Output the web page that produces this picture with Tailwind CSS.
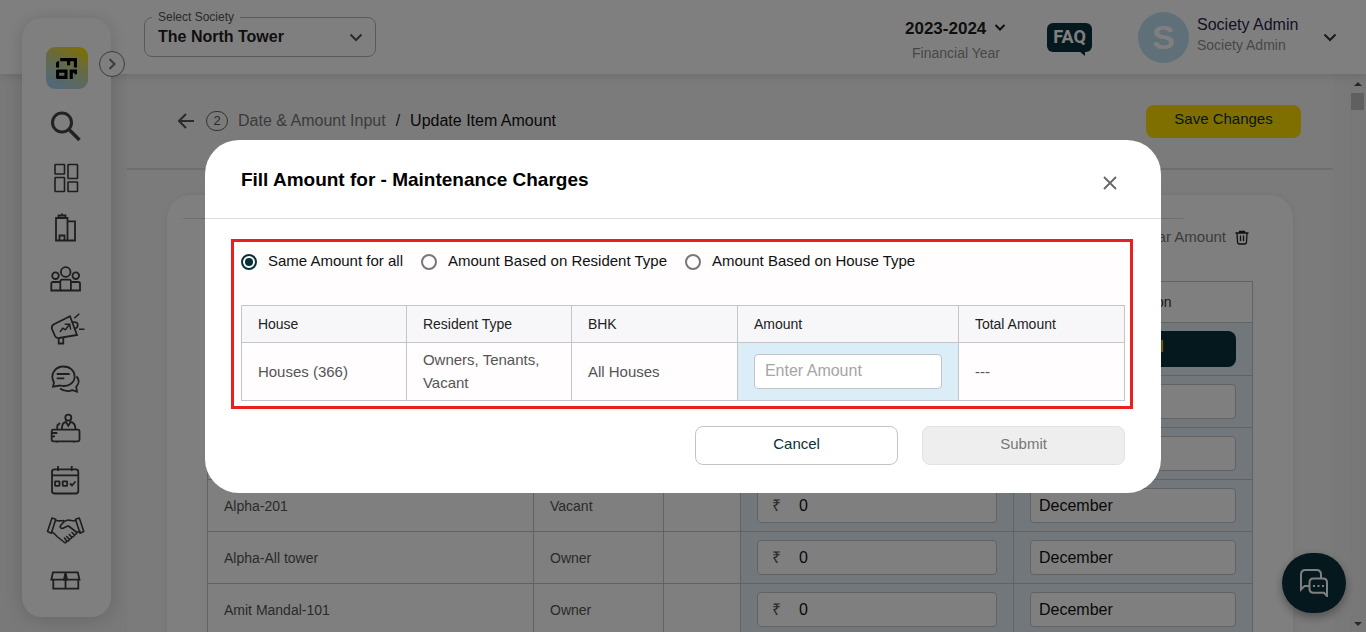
<!DOCTYPE html>
<html lang="en">
  <head>
    <meta charset="UTF-8" />
    <meta name="viewport" content="width=device-width, initial-scale=1.0" />
    <title>Update Item Amount</title>
    <script src="https://cdn.jsdelivr.net/npm/@tailwindcss/browser@4"></script>
  </head>
  <body class="h-screen overflow-hidden flex flex-col bg-[#f2f2f2] font-['Liberation_Sans',Arial,sans-serif] text-[#1f1f1f]">
    <!-- Top bar -->
    <header class="relative flex-none h-[74px] pl-36 pr-7 flex items-center justify-between bg-white shadow-[0_2px_10px_rgba(0,0,0,0.12)]">
      <div class="relative w-[232px]">
        <label for="society" class="absolute -top-2 left-2 px-1.5 bg-white text-xs leading-4 text-[#555]">Select Society</label>
        <select
          id="society"
          class="appearance-none w-full h-10 pl-[13px] pr-8 border border-[#b4b4b4] rounded-lg bg-white text-base font-bold"
        >
          <option>The North Tower</option>
        </select>
        <svg class="absolute right-3 top-3 w-4 h-4 pointer-events-none" viewBox="0 0 16 16" fill="none" stroke="#555" stroke-width="2">
          <path d="M2.5 5.5 8 11l5.500-5.500" />
        </svg>
      </div>
      <div class="flex items-center">
        <div class="w-[102px] mr-10 pt-2 text-center">
          <button class="flex items-center gap-2 text-[17px] leading-6 font-bold">
            2023-2024
            <svg class="w-3 h-3 mb-1" viewBox="0 0 12 12" fill="none" stroke="#1f1f1f" stroke-width="2">
              <path d="M1.500 4 6 8.500 10.500 4" />
            </svg>
          </button>
          <p class="text-sm leading-6 text-[#8f8f8f]">Financial Year</p>
        </div>
        <button class="relative w-[45px] h-[29px] mr-[46px] rounded-md bg-[#08303a] text-white text-lg leading-7 font-bold font-['Roboto','Liberation_Sans',sans-serif]">
          FAQ
          <svg class="absolute right-1.5 top-7 w-2 h-1.5" viewBox="0 0 8 6" fill="#08303a"><path d="M1 0h6v5z" /></svg>
        </button>
        <div class="w-[51px] h-[51px] mr-2 rounded-full bg-[#bfe0f0] flex items-center justify-center text-white text-[34px] font-bold">S</div>
        <div class="w-[125px] pb-1">
          <p class="text-base leading-5 text-[#26264a]">Society Admin</p>
          <p class="text-sm leading-5 text-[#8f8f8f]">Society Admin</p>
        </div>
        <button aria-label="Account menu">
          <svg class="w-4 h-4" viewBox="0 0 16 16" fill="none" stroke="#333" stroke-width="2">
            <path d="M2.500 5.500 8 11l5.500-5.500" />
          </svg>
        </button>
      </div>
    </header>

    <!-- Sidebar -->
    <nav class="fixed top-[18px] bottom-[15px] left-[22px] w-[89px] pt-[29px] pb-[17px] flex flex-col items-center rounded-[20px] bg-white shadow-[0_2px_18px_rgba(0,0,0,0.16)]">
      <a href="#" aria-label="Home" class="w-[42px] h-[42px] mb-[17px] rounded-[9px] bg-[linear-gradient(25deg,#a5d0f5_10%,#c9d48f_55%,#ffde00_95%)] flex items-center justify-center">
        <svg class="w-[21px] h-[21px]" viewBox="0 0 20 20" fill="#000">
          <path d="M0 4.500 1.500 3H3V9H0zM4 0H20V9H17V3H13.500V7H10.500V3H4z" />
          <path d="M1 11H11V20H1L0 19V12zM3 14V17H8V14z" fill-rule="evenodd" />
          <path d="M13 11H20V15.500H17.500V14H16V20H13z" />
        </svg>
      </a>
      <button
        aria-label="Expand menu"
        class="absolute left-[77px] top-[33px] w-[26px] h-[26px] rounded-full border border-[#777] bg-white flex items-center justify-center"
      >
        <svg class="w-3 h-3" viewBox="0 0 12 12" fill="none" stroke="#777" stroke-width="2"><path d="M3.500 1 8.500 6l-5 5" /></svg>
      </button>
      <div class="flex-1 pr-0.5 flex flex-col justify-between">
        <a href="#" aria-label="Search" class="mb-0.5">
          <svg class="block w-10 h-10" viewBox="0 0 40 40" fill="none" stroke="#444" stroke-width="3">
            <circle cx="16" cy="16.500" r="9.500" />
            <path d="m22.500 23 11 11" stroke-width="3.500" />
          </svg>
        </a>
        <a href="#" aria-label="Dashboard">
          <svg class="block w-10 h-10" viewBox="0 0 40 40" fill="none" stroke="#3c3c3c" stroke-width="1.600">
            <rect x="9" y="6.500" width="9.500" height="9.500" rx="0.500" />
            <rect x="22" y="6.500" width="9.500" height="14" rx="0.500" />
            <rect x="9" y="19.500" width="9.500" height="14" rx="0.500" />
            <rect x="22" y="24" width="9.500" height="9.500" rx="0.500" />
          </svg>
        </a>
        <a href="#" aria-label="Buildings">
          <svg class="block w-10 h-10" viewBox="0 0 40 40" fill="none" stroke="#3c3c3c" stroke-width="1.800">
            <path d="M10 10h11.500v22.500H10zM12.500 10V7.500h7V10M16 7.500V5.500M13.500 32.500v-5h5v5M21.500 13.300H29v19.200h-7.500" />
          </svg>
        </a>
        <a href="#" aria-label="Members">
          <svg class="block w-10 h-10" viewBox="0 0 40 40" fill="none" stroke="#3c3c3c" stroke-width="1.800">
            <circle cx="19.700" cy="13" r="4.800" />
            <circle cx="9.500" cy="16.700" r="3.300" />
            <circle cx="29.800" cy="16.700" r="3.300" />
            <path d="M14.300 31.500V22.500q0-1.800 1.800-1.800h7q1.800 0 1.800 1.800v9M14.300 23H7q-1.700 0-1.700 1.700v6.800H34v-6.800Q34 23 32.300 23h-7.500" />
          </svg>
        </a>
        <a href="#" aria-label="Announcements">
          <svg class="block w-10 h-10" viewBox="0 0 40 40" fill="none" stroke="#3c3c3c" stroke-width="1.800">
            <path d="M24 7.300 31 26l-18 3q-3 .3-4-2l-3-7q-.8-3 1.500-4.500z" />
            <path d="M26.500 13.300c3.500-.8 5.500.5 5.200 3.200-.2 2-1.500 3-3.200 3.100M12.700 29v5.500h4.600V28.500" />
            <path d="m28.300 9.300 5-4.600M33 20.300h5.500M14 23l2.700-3.700 2.600 1.400 4.400-5.400M18.700 15.300h5l1 5.400" stroke-width="1.500" />
          </svg>
        </a>
        <a href="#" aria-label="Messages">
          <svg class="block w-10 h-10" viewBox="0 0 40 40" fill="none" stroke="#3c3c3c" stroke-width="1.800">
            <path d="M8 23.500C3.500 15.500 9 7.500 17.700 7.500c6.300 0 11 4.500 11 10 0 6.500-7 11-14.500 9L7 27.700z" />
            <path d="M30.500 17.500c3 3 2.600 7-.3 10.300l.8 4.900-4.500-1.500c-4 1.500-9 .8-12.500-1.700M10.700 15h13M10.700 19.300h7.600" />
          </svg>
        </a>
        <a href="#" aria-label="Help desk">
          <svg class="block w-10 h-10" viewBox="0 0 40 40" fill="none" stroke="#3c3c3c" stroke-width="1.800">
            <rect x="5.700" y="20.700" width="27.800" height="11.600" rx="1.500" />
            <circle cx="22.300" cy="8.700" r="3" />
            <path d="M15.800 20.700c0-4.500 1.700-7.500 4.200-7.700l2.300 3.700 2.300-3.700c3 .3 4.900 3.200 4.900 7.700M11.300 20.500v-4l2.700-2.500M6 24h5.300M6 27.300h3M11 32.500v1M28 32.500v1" />
          </svg>
        </a>
        <a href="#" aria-label="Calendar">
          <svg class="block w-10 h-10" viewBox="0 0 40 40" fill="none" stroke="#3c3c3c" stroke-width="1.800">
            <rect x="6" y="9.300" width="26.300" height="24.200" rx="2.500" />
            <path d="M6 15.300h26.300M12 6v5M25.700 6v5M24 23.500l2 2 3.500-4" />
            <rect x="9" y="21.300" width="4.500" height="4.500" rx="0.500" />
            <rect x="16.700" y="21.300" width="4.500" height="4.500" rx="0.500" />
          </svg>
        </a>
        <a href="#" aria-label="Vendors">
          <svg class="block w-10 h-10" viewBox="0 0 40 40" fill="none" stroke="#3c3c3c" stroke-width="1.600" stroke-linejoin="round" stroke-linecap="round">
            <path d="M6 8 9.800 9.300 5.300 23.300 1.500 21.500zM33.300 8l-3.800 1.300L34 23.300l3.800-1.800z" />
            <path d="M9.800 10.500c3.500.6 5.500.4 7.700 0M29.500 10.700c-3.500.5-5-1-8.500-.5-2.500.3-4.500 3-6.500 5.500-1.200 1.800.8 3 2.500 2.500 2.500-.8 3.500-2.200 5.500-2.200L31 22.500l3-1.500M6 22.200c2.500.6 3 2.300 5 4.300l7.500 6c1.300.7 2.500-.5 2-1.700L18.500 28M20.700 31c1.800.6 3-.6 2.300-2l-2.300-2.500M23 28.800c1.800.6 3-.8 2.300-2l-2-2.300M25.500 26.700c1.800.6 3.200-.8 2.500-2.200l-2-2M28 24.500c1.600.4 2.800-.8 2.500-2.200" />
          </svg>
        </a>
        <a href="#" aria-label="Inventory">
          <svg class="block w-10 h-10" viewBox="0 0 40 40" fill="none" stroke="#3c3c3c" stroke-width="1.800">
            <path d="M7 12.300h24.800l1.700 7.400H5.300zM7.300 19.700v9h25v-9M19.500 19.700v9" />
            <path d="m19.500 12.500 1.500 7h-3z" fill="#3c3c3c" />
          </svg>
        </a>
      </div>
    </nav>

    <div class="flex-1 min-h-0 flex">
      <main class="flex-1 min-w-0 ml-[127px] mr-4 overflow-hidden bg-[#f7f7f7]">
        <div class="h-24 pl-[51px] pr-8 flex items-center justify-between border-b-2 border-[#dcdcdc]">
          <div class="flex items-center text-base">
            <a href="#" aria-label="Back">
              <svg class="w-4 h-4" viewBox="0 0 16 16" fill="none" stroke="#555" stroke-width="2"><path d="M16 8H1.500M8 1 1 8l7 7" /></svg>
            </a>
            <span class="w-[22px] h-5 ml-3 mr-2.5 rounded-full border border-[#666] flex items-center justify-center text-[13px] text-[#555]">2</span>
            <a href="#" class="text-[#777]">Date &amp; Amount Input</a>
            <span class="mx-2.5">/</span>
            <h1 class="text-[#111]">Update Item Amount</h1>
          </div>
          <button class="w-[155px] h-[33px] rounded-lg bg-[#ffde00] pb-1 text-[15px] text-[#08303a]">Save Changes</button>
        </div>

        <section class="mt-[25px] ml-10 mr-10 rounded-t-[24px] bg-white shadow-[0_0_6px_rgba(0,0,0,0.08)]">
          <div class="pt-[23px] pl-4 pr-[110px]"><hr class="border-[#ddd]" /></div>
          <div class="h-[62px] pt-1.5 pr-[43px] flex justify-end items-start">
            <button class="flex items-center gap-2 text-[15px] leading-6 text-[#777]">
              Clear Amount
              <svg class="w-4 h-4" viewBox="0 0 16 16" fill="none" stroke="#222" stroke-width="1.300">
                <path d="M1.500 4h13M5.500 4V2.500h5V4M3 4l.5 9q.1 2 2 2h5q1.900 0 2-2L13 4M6.500 6.500V12M9.500 6.500V12" />
              </svg>
            </button>
          </div>
          <table class="table-fixed w-[1046px] ml-10 border-collapse text-left text-sm text-[#555]">
            <colgroup>
              <col class="w-[326px]" />
              <col class="w-[130px]" />
              <col class="w-[77px]" />
              <col class="w-[273px]" />
              <col />
            </colgroup>
            <thead class="text-[#333]">
              <tr class="h-[41px]">
                <th class="border border-[#c4c4c8] px-4 font-normal">House</th>
                <th class="border border-[#c4c4c8] px-4 font-normal">Resident</th>
                <th class="border border-[#c4c4c8] px-4 font-normal">BHK</th>
                <th class="border border-[#c4c4c8] px-4 font-normal">Amount</th>
                <th class="border border-[#c4c4c8] px-4 font-normal">Installment Description</th>
              </tr>
            </thead>
            <tbody>
              <tr class="h-[53px]">
                <td class="border border-[#c4c4c8] px-4"></td>
                <td class="border border-[#c4c4c8] px-4"></td>
                <td class="border border-[#c4c4c8] px-4"></td>
                <td class="border border-[#c4c4c8] px-4 bg-[#e3eff5]"></td>
                <td class="border border-[#c4c4c8] px-4 bg-[#e3eff5]">
                  <button class="block w-full h-9 pb-1 rounded-lg bg-[#08303a] text-base text-[#ffde00]">Apply All</button>
                </td>
              </tr>
              <tr class="h-[52px]">
                <td class="border border-[#c4c4c8] px-4">Alpha-101</td>
                <td class="border border-[#c4c4c8] px-4">Owner</td>
                <td class="border border-[#c4c4c8] px-4"></td>
                <td class="border border-[#c4c4c8] px-4 bg-[#e3eff5]"></td>
                <td class="border border-[#c4c4c8] px-4 bg-[#e3eff5]">
                  <input aria-label="Description" class="block w-full h-[35px] px-2 border border-[#c4c4c8] rounded bg-white text-base text-[#111]" />
                </td>
              </tr>
              <tr class="h-[52px]">
                <td class="border border-[#c4c4c8] px-4">Alpha-102</td>
                <td class="border border-[#c4c4c8] px-4">Owner</td>
                <td class="border border-[#c4c4c8] px-4"></td>
                <td class="border border-[#c4c4c8] px-4 bg-[#e3eff5]"></td>
                <td class="border border-[#c4c4c8] px-4 bg-[#e3eff5]">
                  <input aria-label="Description" class="block w-full h-[35px] px-2 border border-[#c4c4c8] rounded bg-white text-base text-[#111]" />
                </td>
              </tr>
              <tr class="h-[52px]">
                <td class="border border-[#c4c4c8] px-4">Alpha-201</td>
                <td class="border border-[#c4c4c8] px-4">Vacant</td>
                <td class="border border-[#c4c4c8] px-4"></td>
                <td class="border border-[#c4c4c8] px-4 bg-[#e3eff5]">
                  <label class="flex items-center h-[35px] px-3.5 border border-[#c4c4c8] rounded bg-white">
                    <span class="w-[27px] text-base">₹</span>
                    <input aria-label="Amount" class="min-w-0 flex-1 text-base text-[#111]" value="0" />
                  </label>
                </td>
                <td class="border border-[#c4c4c8] px-4 bg-[#e3eff5]">
                  <input aria-label="Description" class="block w-full h-[35px] px-2 border border-[#c4c4c8] rounded bg-white text-base text-[#111]" value="December" />
                </td>
              </tr>
              <tr class="h-[52px]">
                <td class="border border-[#c4c4c8] px-4">Alpha-All tower</td>
                <td class="border border-[#c4c4c8] px-4">Owner</td>
                <td class="border border-[#c4c4c8] px-4"></td>
                <td class="border border-[#c4c4c8] px-4 bg-[#e3eff5]">
                  <label class="flex items-center h-[35px] px-3.5 border border-[#c4c4c8] rounded bg-white">
                    <span class="w-[27px] text-base">₹</span>
                    <input aria-label="Amount" class="min-w-0 flex-1 text-base text-[#111]" value="0" />
                  </label>
                </td>
                <td class="border border-[#c4c4c8] px-4 bg-[#e3eff5]">
                  <input aria-label="Description" class="block w-full h-[35px] px-2 border border-[#c4c4c8] rounded bg-white text-base text-[#111]" value="December" />
                </td>
              </tr>
              <tr class="h-[52px]">
                <td class="border border-[#c4c4c8] px-4">Amit Mandal-101</td>
                <td class="border border-[#c4c4c8] px-4">Owner</td>
                <td class="border border-[#c4c4c8] px-4"></td>
                <td class="border border-[#c4c4c8] px-4 bg-[#e3eff5]">
                  <label class="flex items-center h-[35px] px-3.5 border border-[#c4c4c8] rounded bg-white">
                    <span class="w-[27px] text-base">₹</span>
                    <input aria-label="Amount" class="min-w-0 flex-1 text-base text-[#111]" value="0" />
                  </label>
                </td>
                <td class="border border-[#c4c4c8] px-4 bg-[#e3eff5]">
                  <input aria-label="Description" class="block w-full h-[35px] px-2 border border-[#c4c4c8] rounded bg-white text-base text-[#111]" value="December" />
                </td>
              </tr>
            </tbody>
          </table>
        </section>
      </main>
      <!-- Scroll track -->
      <div class="flex-none w-[17px] pt-2 pb-1.5 flex flex-col items-center bg-[#f1f1f1]">
        <svg class="w-2 h-1" viewBox="0 0 8 4" fill="#505050"><path d="M0 4h8L4 0z" /></svg>
        <div class="w-[13px] h-[17px] mt-[7px] bg-[#c1c1c1]"></div>
        <svg class="w-2 h-1 mt-auto" viewBox="0 0 8 4" fill="#505050"><path d="M0 0h8L4 4z" /></svg>
      </div>
    </div>

    <!-- Chat button -->
    <button aria-label="Chat" class="fixed right-5 bottom-[19px] w-16 h-[60px] rounded-full bg-[#08303a] shadow-[0_4px_10px_rgba(0,0,0,0.35)] flex items-center justify-center">
      <svg class="w-7 h-7" viewBox="0 0 28 28" fill="none" stroke="#fff" stroke-width="2">
        <path d="M9 17H4.500L1 20.500V5.500Q1 1 5.500 1h11q4.500 0 4.500 4.500V9" />
        <path d="M13.500 9.500H23q4 0 4 4V27l-3-3.200H13.500q-4 0-4-4v-6.300q0-4 4-4z" />
        <path d="M13 17h2M17.500 17h2M22 17h2" />
      </svg>
    </button>

    <!-- Modal -->
    <div class="fixed inset-0 bg-black/50 flex items-center justify-center">
      <div role="dialog" aria-labelledby="modal-title" class="w-[70%] rounded-[34px] bg-white">
        <div class="h-[79px] pl-9 pr-[41px] flex items-center justify-between border-b border-[#ddd]">
          <h2 id="modal-title" class="pt-1 text-[19px] font-bold text-black">Fill Amount for - Maintenance Charges</h2>
          <button aria-label="Close" class="mt-2">
            <svg class="w-5 h-5" viewBox="0 0 20 20" fill="none" stroke="#666" stroke-width="1.800"><path d="m4 4 12 12M16 4 4 16" /></svg>
          </button>
        </div>
        <div class="pt-5 pl-[26px] pr-7 pb-7">
          <div class="pt-2 pb-[5px] pl-[7px] pr-[5px] border-3 border-[#ea1f1f] bg-[#fffdfe]">
            <div class="h-6 mb-[31px] flex items-center gap-[18px] text-[15px] text-[#111]">
              <label class="flex items-center gap-[11px]">
                <input type="radio" name="basis" checked class="appearance-none w-4 h-4 rounded-full border-2 border-[#08303a] bg-[#08303a] bg-clip-content p-0.5" />
                Same Amount for all
              </label>
              <label class="flex items-center gap-[11px]">
                <input type="radio" name="basis" class="appearance-none w-4 h-4 rounded-full border-2 border-[#777]" />
                Amount Based on Resident Type
              </label>
              <label class="flex items-center gap-[11px]">
                <input type="radio" name="basis" class="appearance-none w-4 h-4 rounded-full border-2 border-[#777]" />
                Amount Based on House Type
              </label>
            </div>
            <table class="table-fixed w-full border-collapse text-left">
              <colgroup>
                <col class="w-[165px]" />
                <col class="w-[165px]" />
                <col class="w-[166px]" />
                <col class="w-[221px]" />
                <col />
              </colgroup>
              <thead class="bg-[#f7f7fa] text-sm text-[#222]">
                <tr class="h-[37px]">
                  <th class="border border-[#c4c4cc] px-4 font-normal">House</th>
                  <th class="border border-[#c4c4cc] px-4 font-normal">Resident Type</th>
                  <th class="border border-[#c4c4cc] px-4 font-normal">BHK</th>
                  <th class="border border-[#c4c4cc] px-4 font-normal">Amount</th>
                  <th class="border border-[#c4c4cc] px-4 font-normal">Total Amount</th>
                </tr>
              </thead>
              <tbody class="text-[15px] leading-[23px] text-[#555]">
                <tr class="h-[58px]">
                  <td class="border border-[#c4c4cc] px-4">Houses (366)</td>
                  <td class="border border-[#c4c4cc] px-4">Owners, Tenants, Vacant</td>
                  <td class="border border-[#c4c4cc] px-4">All Houses</td>
                  <td class="border border-[#c4c4cc] px-4 bg-[#dbedf6]">
                    <input
                      aria-label="Amount"
                      placeholder="Enter Amount"
                      class="block w-full h-[35px] px-2.5 border border-[#c4c4c8] rounded bg-white text-base placeholder:text-[#a5a5a5]"
                    />
                  </td>
                  <td class="border border-[#c4c4cc] px-4">---</td>
                </tr>
              </tbody>
            </table>
          </div>
          <div class="mt-[17px] pr-2 flex justify-end gap-6 text-[15px]">
            <button class="w-[203px] h-[39px] pb-0.5 rounded-lg border border-[#c4c4c8] text-[#08303a]">Cancel</button>
            <button disabled class="w-[203px] h-[39px] pb-0.5 rounded-lg border border-[#e2e2e2] bg-[#eee] text-[#777]">Submit</button>
          </div>
        </div>
      </div>
    </div>
  </body>
</html>
